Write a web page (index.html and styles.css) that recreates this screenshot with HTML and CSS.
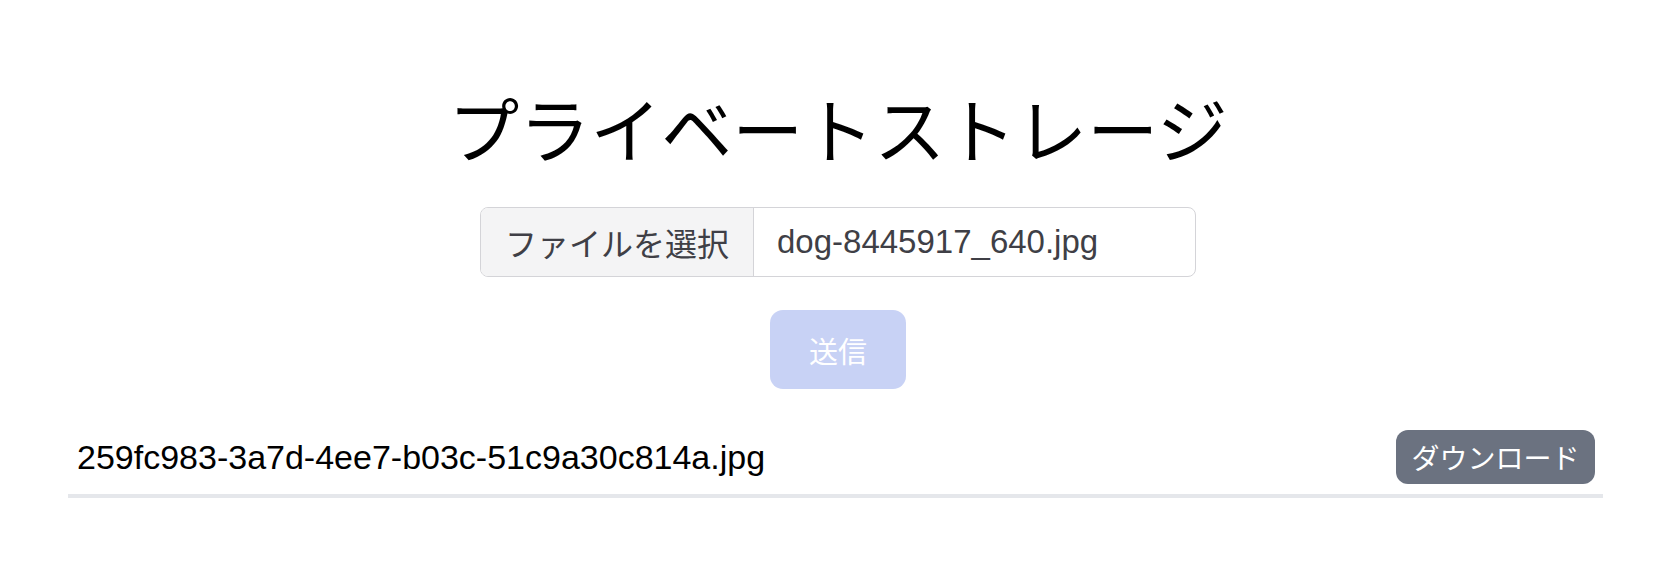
FILE: index.html
```html
<!DOCTYPE html>
<html lang="ja">
<head>
<meta charset="utf-8">
<title>プライベートストレージ</title>
<link rel="stylesheet" href="styles.css">
</head>
<body>
<main class="page">
  <h1 class="title">プライベートストレージ</h1>
  <form class="upload">
    <div class="file-field">
      <span class="file-button">ファイルを選択</span>
      <span class="file-name">dog-8445917_640.jpg</span>
    </div>
    <button type="button" class="submit" disabled>送信</button>
  </form>
  <ul class="files">
    <li class="file-row">
      <span class="file-title">259fc983-3a7d-4ee7-b03c-51c9a30c814a.jpg</span>
      <button type="button" class="download">ダウンロード</button>
    </li>
  </ul>
</main>
</body>
</html>
```
FILE: styles.css
```css
html, body {
  margin: 0;
  padding: 0;
  background: #ffffff;
}
body {
  font-family: "Liberation Sans", "Noto Sans CJK JP", sans-serif;
  color: #000;
}
.page {
  padding-top: 91px;
  display: flex;
  flex-direction: column;
  align-items: center;
}
.title {
  margin: 0;
  font-family: "Noto Sans CJK JP", sans-serif;
  font-weight: 400;
  font-size: 71px;
  line-height: 71px;
  color: #000;
  letter-spacing: 0;
}
.upload {
  margin-top: 45px;
  display: flex;
  flex-direction: column;
  align-items: center;
  gap: 33px;
}
.file-field {
  box-sizing: border-box;
  width: 716px;
  height: 70px;
  display: flex;
  align-items: stretch;
  border: 1.5px solid #d4d4d8;
  border-radius: 8px;
  overflow: hidden;
  background: #fff;
}
.file-button {
  display: flex;
  align-items: center;
  padding: 0 24px;
  background: #f4f4f5;
  border-right: 1.5px solid #d4d4d8;
  font-family: "Noto Sans CJK JP", sans-serif;
  font-size: 32px;
  color: #3f3f46;
}
.file-name {
  display: flex;
  align-items: center;
  padding-left: 23px;
  font-family: "Liberation Sans", "Noto Sans CJK JP", sans-serif;
  font-size: 33px;
  color: #3f3f46;
}
.submit {
  width: 136px;
  height: 79px;
  border: none;
  border-radius: 13px;
  background: #c8d2f5;
  color: #ffffff;
  font-family: "Noto Sans CJK JP", sans-serif;
  font-size: 29px;
  padding: 0;
}
.files {
  list-style: none;
  margin: 41px 0 0 0;
  padding: 0;
  align-self: flex-start;
  margin-left: 68px;
  width: 1535px;
}
.file-row {
  display: flex;
  align-items: center;
  justify-content: space-between;
  padding: 0 8px 10px 9px;
  border-bottom: 4px solid #e5e7eb;
}
.file-title {
  font-family: "Liberation Sans", sans-serif;
  font-size: 34px;
  color: #000;
}
.download {
  width: 199px;
  height: 54px;
  border: none;
  border-radius: 12px;
  background: #6b7280;
  color: #fff;
  font-family: "Noto Sans CJK JP", sans-serif;
  font-size: 28px;
  padding: 0;
}
```
